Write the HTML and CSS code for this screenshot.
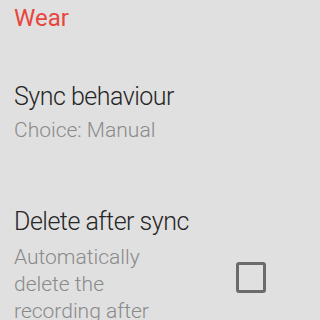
FILE: index.html
```html
<!DOCTYPE html>
<html lang="en">
  <head>
    <meta charset="UTF-8" />
    <meta name="viewport" content="width=device-width, initial-scale=1.0" />
    <title>Settings</title>
    <link rel="stylesheet" href="styles.css">
  </head>
  <body>
    <div class="screen">
      <div class="category">Wear</div>

      <div class="pref pref-list">
        <div class="pref-text">
          <div class="pref-title">Sync behaviour</div>
          <div class="pref-summary">Choice: Manual</div>
        </div>
      </div>

      <div class="pref pref-check">
        <div class="pref-text">
          <div class="pref-title">Delete after sync</div>
          <div class="pref-summary">Automatically delete the recording after sync</div>
        </div>
        <div class="pref-widget">
          <div class="checkbox"></div>
        </div>
      </div>
    </div>
  </body>
</html>
```

FILE: styles.css
```css
* {
  margin: 0;
  padding: 0;
  box-sizing: border-box;
}

body {
  width: 320px;
  height: 320px;
  overflow: hidden;
  background-color: #e0e0e0;
  font-family: Roboto, "Noto Sans", sans-serif;
}

.screen {
  padding: 4px 0 0 14px;
}

.category {
  font-size: 24px;
  line-height: 28px;
  color: #e8453c;
}

.pref {
  display: flex;
  align-items: flex-start;
}

.pref-list {
  margin-top: 51px;
}

.pref-check {
  margin-top: 64px;
}

.pref-text {
  width: 182px;
}

.pref-title {
  font-size: 25px;
  line-height: 28px;
  font-weight: 300;
  letter-spacing: -0.5px;
  color: #262626;
  white-space: nowrap;
}

.pref-summary {
  max-width: 168px;
  font-size: 21px;
  line-height: 27px;
  font-weight: 300;
  color: #8a8a8a;
  margin-top: 6px;
}

.pref-check .pref-summary {
  margin-top: 8px;
}

.pref-widget {
  flex: 1;
  padding: 54px 0 0 40px;
}

.checkbox {
  width: 30px;
  height: 31px;
  border: 3px solid #6b6b6b;
  border-radius: 3px;
}
```
